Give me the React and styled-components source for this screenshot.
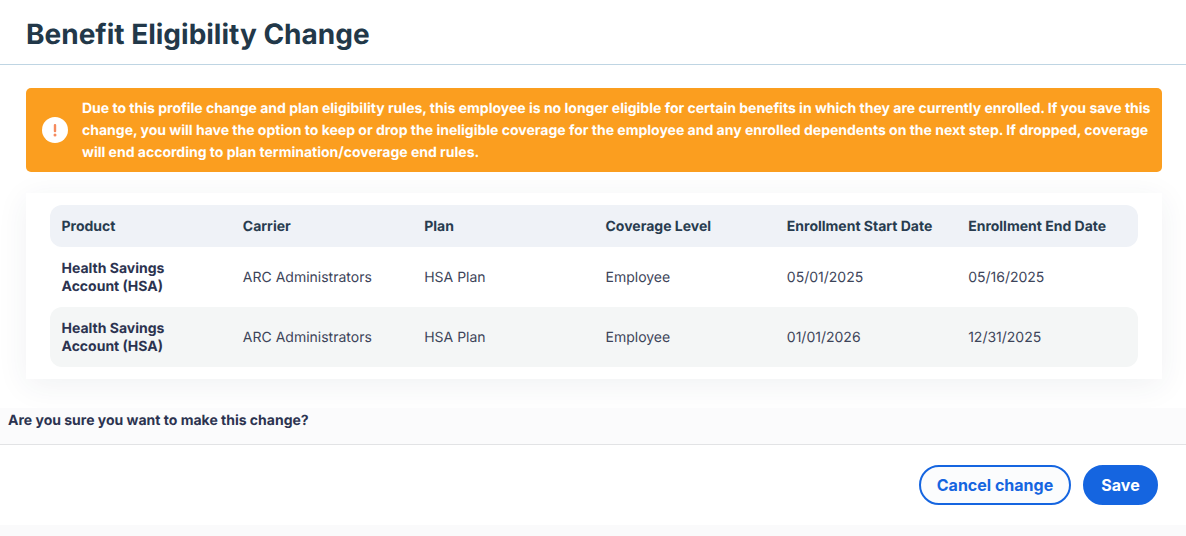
import React from 'react';
import styled, { createGlobalStyle } from 'styled-components';

const rows = [
  { start: '05/01/2025', end: '05/16/2025' },
  { start: '01/01/2026', end: '12/31/2025', shaded: true },
];

export default function App() {
  return (
    <>
      <GlobalStyle />
      <Page>
        <Header>
          <Title>Benefit Eligibility Change</Title>
        </Header>
        <Body>
          <Alert>
            <AlertIcon>
              <svg width="26" height="26" viewBox="0 0 26 26" aria-hidden="true">
                <circle cx="13" cy="13" r="13" fill="#fff" />
                <rect x="11.8" y="7" width="2.4" height="8.2" rx="1" fill="#f58a5e" />
                <circle cx="13" cy="18" r="1.5" fill="#f58a5e" />
              </svg>
            </AlertIcon>
            <AlertText>
              Due to this profile change and plan eligibility rules, this employee is no longer eligible for certain benefits in which they are currently enrolled. If you save this change, you will have the option to keep or drop the ineligible coverage for the employee and any enrolled dependents on the next step. If dropped, coverage will end according to plan termination/coverage end rules.
            </AlertText>
          </Alert>
          <Card>
            <HeadRow>
              <HeadCell>Product</HeadCell>
              <HeadCell>Carrier</HeadCell>
              <HeadCell>Plan</HeadCell>
              <HeadCell>Coverage Level</HeadCell>
              <HeadCell>Enrollment Start Date</HeadCell>
              <HeadCell>Enrollment End Date</HeadCell>
            </HeadRow>
            {rows.map((row) => (
              <Row key={row.start} $shaded={row.shaded}>
                <ProductCell>Health Savings<br />Account (HSA)</ProductCell>
                <Cell>ARC Administrators</Cell>
                <Cell>HSA Plan</Cell>
                <Cell>Employee</Cell>
                <Cell>{row.start}</Cell>
                <Cell>{row.end}</Cell>
              </Row>
            ))}
          </Card>
        </Body>
        <Question>Are you sure you want to make this change?</Question>
        <Footer>
          <CancelButton>Cancel change</CancelButton>
          <SaveButton>Save</SaveButton>
        </Footer>
      </Page>
    </>
  );
}

const GlobalStyle = createGlobalStyle`
  html, body {
    margin: 0;
    padding: 0;
    background: #fafafb;
    font-family: Inter, "Liberation Sans", sans-serif;
    text-rendering: geometricPrecision;
  }
  * { box-sizing: border-box; }
`;
const Page = styled.div`
  width: 1186px;
  height: 536px;
  overflow: hidden;
  background: #fafafb;
`;
const Header = styled.header`
  height: 65px;
  padding: 16px 26px 0;
  background: #fff;
  border-bottom: 1px solid #bfd5e3;
`;
const Title = styled.h1`
  margin: 0;
  font-size: 28px;
  line-height: 37px;
  font-weight: 650;
  color: #223849;
`;
const Body = styled.div`
  height: 343px;
  padding: 23px 24px 0 26px;
  background: #fff;
`;
const Alert = styled.div`
  height: 84px;
  display: flex;
  align-items: center;
  padding: 2px 8px 0 16px;
  gap: 14px;
  background: #fb9e1f;
  border-radius: 5px;
`;
const AlertIcon = styled.span`
  display: flex;
  flex: none;
  margin-top: -2px;
`;
const AlertText = styled.p`
  margin: 0;
  font-size: 14px;
  line-height: 22px;
  font-weight: 700;
  color: #fff;
`;
const Card = styled.div`
  margin-top: 21px;
  height: 186px;
  padding: 12px 24px;
  background: #fff;
  box-shadow: 0 6px 30px rgba(40, 60, 90, 0.07);
`;
const HeadRow = styled.div`
  height: 42px;
  display: grid;
  grid-template-columns: repeat(6, 1fr);
  align-items: center;
  background: #eff2f7;
  border-radius: 12px;
`;
const Row = styled.div`
  height: 60px;
  display: grid;
  grid-template-columns: repeat(6, 1fr);
  align-items: center;
  background: ${(p) => (p.$shaded ? '#f4f6f6' : '#fff')};
  border-radius: 12px;
`;
const HeadCell = styled.div`
  padding-left: 11.5px;
  font-size: 14px;
  font-weight: 650;
  color: #283c4f;
`;
const Cell = styled.div`
  padding-left: 11.5px;
  font-size: 14px;
  color: #3d4459;
`;
const ProductCell = styled(Cell)`
  padding-top: 2px;
  font-weight: 650;
  line-height: 18px;
  color: #2c3350;
`;
const Question = styled.div`
  height: 37px;
  padding: 4px 8px 0;
  font-size: 14px;
  line-height: 18px;
  font-weight: 650;
  color: #2c3350;
  background: #fbfbfc;
  border-bottom: 1px solid #e2e3e5;
`;
const Footer = styled.footer`
  height: 80px;
  display: flex;
  justify-content: flex-end;
  align-items: center;
  gap: 12px;
  padding-right: 28px;
  background: #fff;
`;
const CancelButton = styled.button`
  width: 152px;
  height: 40px;
  padding: 0;
  font: 650 16px Inter, "Liberation Sans", sans-serif;
  color: #1565e0;
  background: #fbfcfd;
  border: 2px solid #1565e0;
  border-radius: 20px;
`;
const SaveButton = styled(CancelButton)`
  width: 75px;
  color: #fff;
  background: #1565e0;
`;
